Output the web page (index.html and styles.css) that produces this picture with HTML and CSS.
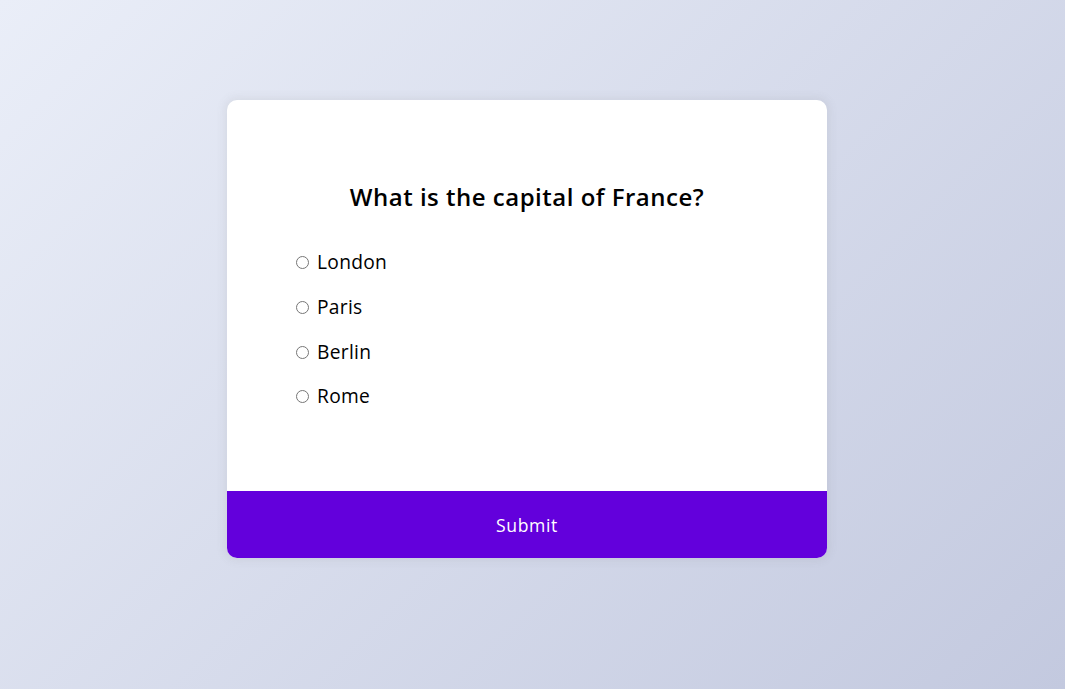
FILE: index.html
```html
<!DOCTYPE html>
<html lang="en">
<head>
<meta charset="UTF-8">
<title>Quiz</title>
<link rel="stylesheet" href="styles.css">
</head>
<body>
<div class="quiz-container">
  <div class="quiz-header">
    <h2 class="question">What is the capital of France?</h2>
    <ul class="answers">
      <li><input type="radio" name="answer" id="a"><label for="a">London</label></li>
      <li><input type="radio" name="answer" id="b"><label for="b">Paris</label></li>
      <li><input type="radio" name="answer" id="c"><label for="c">Berlin</label></li>
      <li><input type="radio" name="answer" id="d"><label for="d">Rome</label></li>
    </ul>
  </div>
  <button class="submit">Submit</button>
</div>
</body>
</html>
```
FILE: styles.css
```css
* { box-sizing: border-box; }
html, body { height: 100%; }
body {
  margin: 0;
  padding: 100px 11px 0 0;
  display: flex;
  justify-content: center;
  align-items: flex-start;
  overflow: hidden;
  font-family: "Open Sans", "Noto Sans", sans-serif;
  background: linear-gradient(135deg, #eaeef8 0%, #c3c9df 100%);
}
.quiz-container {
  width: 600px;
  background: #fff;
  border-radius: 10px;
  box-shadow: 0 0 10px 2px rgba(100, 100, 100, 0.1);
  overflow: hidden;
}
.quiz-header { padding: 64px; }
.question {
  margin: 0;
  padding: 15px 16px 17px;
  text-align: center;
  font-size: 24px;
  line-height: 36px;
  font-weight: 600;
  letter-spacing: 0.5px;
  color: #000;
}
.answers {
  list-style: none;
  padding: 0;
  margin: 16px 0;
}
.answers li {
  font-size: 19.2px;
  line-height: 28.8px;
  margin: 16px 0;
  color: #000;
  letter-spacing: 0.3px;
}
.answers input { margin: 3px 3px 0 5px; }
.answers label { margin-left: 5px; }
.submit {
  display: block;
  width: 100%;
  border: none;
  background: #6300dc;
  color: #fff;
  font-family: inherit;
  font-size: 17.6px;
  line-height: 26px;
  letter-spacing: 0.6px;
  padding: 20.5px;
  cursor: pointer;
}
```
